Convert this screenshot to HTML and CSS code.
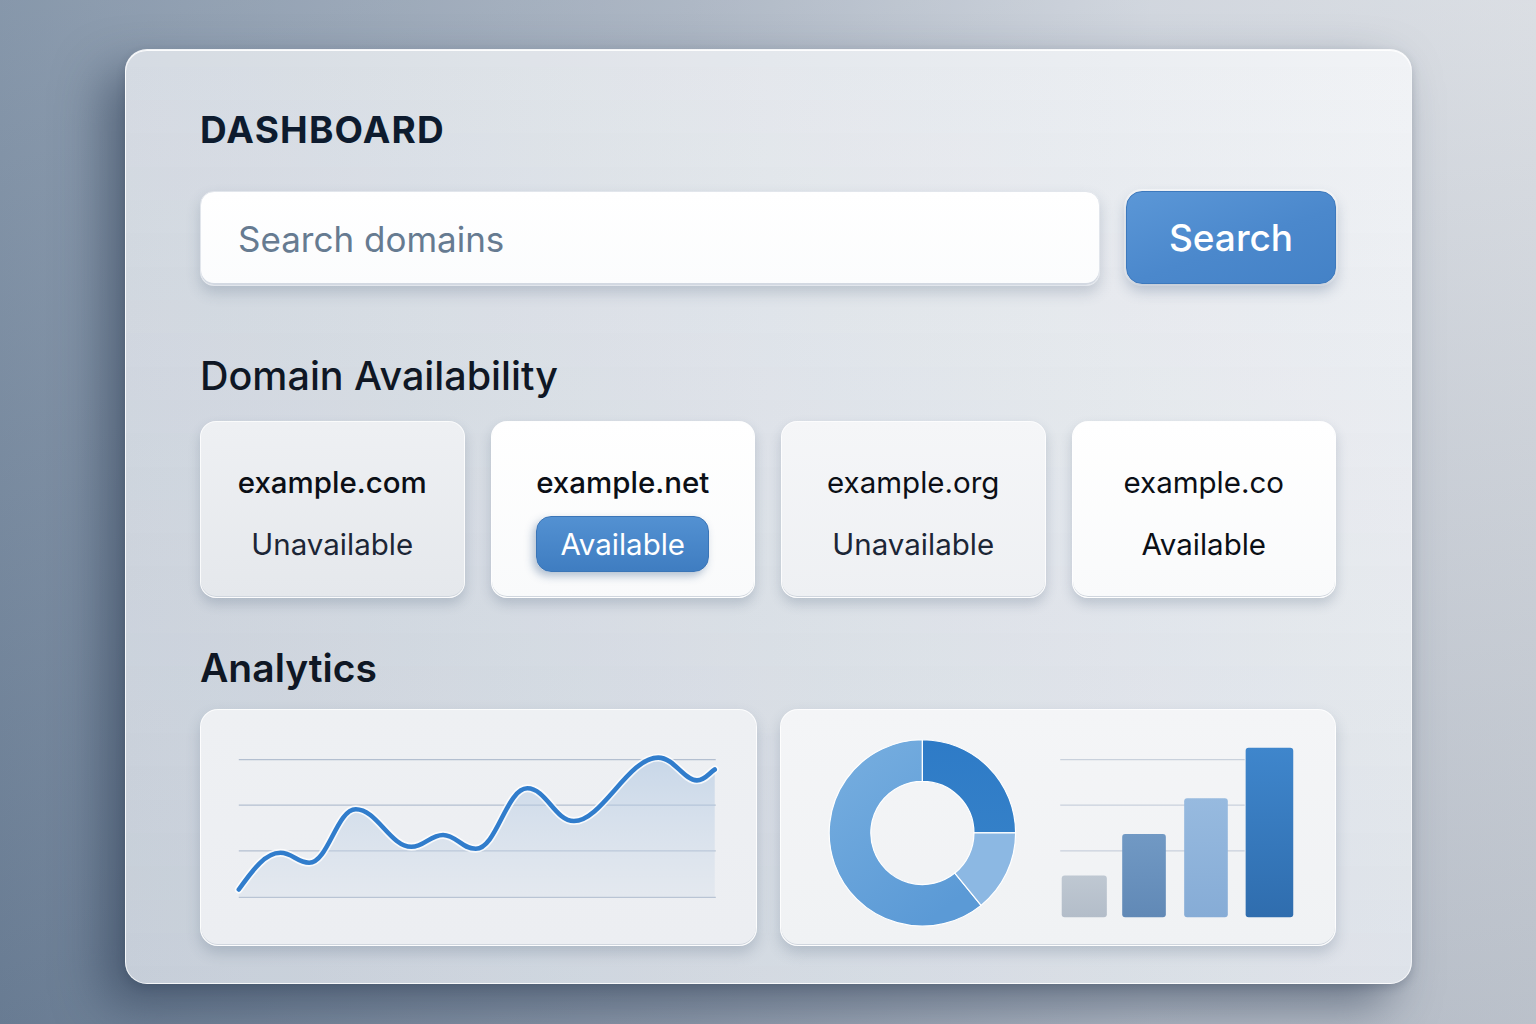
FILE: index.html
```html
<!DOCTYPE html>
<html lang="en">
<head>
<meta charset="utf-8">
<title>Dashboard</title>
<link rel="stylesheet" href="styles.css">
</head>
<body>
<main class="panel">
  <h1 class="title">DASHBOARD</h1>
  <div class="search-row">
    <div class="search-input">Search domains</div>
    <button class="search-btn">Search</button>
  </div>

  <h2 class="section-title">Domain Availability</h2>
  <div class="domains">
    <div class="domain-card card-gray">
      <div class="domain-name">example.com</div>
      <div class="status">Unavailable</div>
    </div>
    <div class="domain-card card-white">
      <div class="domain-name">example.net</div>
      <div class="status status-pill">Available</div>
    </div>
    <div class="domain-card card-light">
      <div class="domain-name name-regular">example.org</div>
      <div class="status">Unavailable</div>
    </div>
    <div class="domain-card card-white">
      <div class="domain-name name-regular">example.co</div>
      <div class="status status-dark">Available</div>
    </div>
  </div>

  <h2 class="section-title analytics-title">Analytics</h2>
  <div class="charts">
    <div class="chart-card chart-left">
      <svg class="chart-svg" viewBox="0 0 557 237" width="557" height="237">
        <defs>
          <linearGradient id="areaFill" x1="0" y1="0" x2="0" y2="1">
            <stop offset="0" stop-color="#a9c3e0" stop-opacity="0.55"/>
            <stop offset="1" stop-color="#d3dde9" stop-opacity="0.35"/>
          </linearGradient>
        </defs>
        <g stroke="#b3bfd0" stroke-width="1.2">
          <line x1="37" y1="50" x2="518" y2="50"/>
          <line x1="37" y1="96" x2="518" y2="96"/>
          <line x1="37" y1="142" x2="518" y2="142"/>
          <line x1="37" y1="189" x2="518" y2="189"/>
        </g>
        <path fill="url(#areaFill)" d="M37,181 C52,160 64,144 79,144 C91,144 96,154 108,154 C127,154 136,100 155,100 C176,100 190,138 211,138 C224,138 230,126 243,126 C256,126 262,140 276,140 C297,140 307,79 328,79 C347,79 356,112 375,112 C403,112 430,48 460,48 C476,48 486,71 499,71 C507,71 511,64 517,60 L517,189 L37,189 Z"/>
        <path fill="none" stroke="#ffffff" stroke-opacity="0.8" stroke-width="8" stroke-linecap="round" d="M37,181 C52,160 64,144 79,144 C91,144 96,154 108,154 C127,154 136,100 155,100 C176,100 190,138 211,138 C224,138 230,126 243,126 C256,126 262,140 276,140 C297,140 307,79 328,79 C347,79 356,112 375,112 C403,112 430,48 460,48 C476,48 486,71 499,71 C507,71 511,64 517,60"/>
        <path fill="none" stroke="#317dcc" stroke-width="4.6" stroke-linecap="round" d="M37,181 C52,160 64,144 79,144 C91,144 96,154 108,154 C127,154 136,100 155,100 C176,100 190,138 211,138 C224,138 230,126 243,126 C256,126 262,140 276,140 C297,140 307,79 328,79 C347,79 356,112 375,112 C403,112 430,48 460,48 C476,48 486,71 499,71 C507,71 511,64 517,60"/>
      </svg>
    </div>
    <div class="chart-card chart-right">
      <svg class="chart-svg" viewBox="0 0 556 237" width="556" height="237">
        <defs>
          <linearGradient id="donutMed" x1="0" y1="0" x2="0.6" y2="1">
            <stop offset="0" stop-color="#78afe0"/>
            <stop offset="1" stop-color="#5b9ad6"/>
          </linearGradient>
          <linearGradient id="donutDark" x1="0" y1="0" x2="0" y2="1">
            <stop offset="0" stop-color="#2e7bc7"/>
            <stop offset="1" stop-color="#3480c8"/>
          </linearGradient>
          <linearGradient id="barDark" x1="0" y1="0" x2="0" y2="1">
            <stop offset="0" stop-color="#3f86cc"/>
            <stop offset="1" stop-color="#2f6dae"/>
          </linearGradient>
          <linearGradient id="barMid" x1="0" y1="0" x2="0" y2="1">
            <stop offset="0" stop-color="#7199c4"/>
            <stop offset="1" stop-color="#6189b6"/>
          </linearGradient>
          <linearGradient id="barLight" x1="0" y1="0" x2="0" y2="1">
            <stop offset="0" stop-color="#97badf"/>
            <stop offset="1" stop-color="#86acd6"/>
          </linearGradient>
          <linearGradient id="barGray" x1="0" y1="0" x2="0" y2="1">
            <stop offset="0" stop-color="#bfc8d2"/>
            <stop offset="1" stop-color="#b3bdc9"/>
          </linearGradient>
        </defs>
        <g stroke="#ffffff" stroke-width="1.2">
          <path fill="url(#donutMed)" d="M200.2,197 A94,94 0 1 1 141,30 L141,72 A52,52 0 1 0 173.7,164.4 Z"/>
          <path fill="url(#donutDark)" d="M141,30 A94,94 0 0 1 235,124 L193,124 A52,52 0 0 0 141,72 Z"/>
          <path fill="#8cb8e3" d="M235,124 A94,94 0 0 1 200.2,197 L173.7,164.4 A52,52 0 0 0 193,124 Z"/>
        </g>
        <g stroke="#c9d1dc" stroke-width="1.2">
          <line x1="280" y1="50" x2="466" y2="50"/>
          <line x1="280" y1="96" x2="466" y2="96"/>
          <line x1="280" y1="142" x2="466" y2="142"/>
        </g>
        <rect x="281.5" y="167" width="45.5" height="42" rx="3" fill="url(#barGray)"/>
        <rect x="342.5" y="125" width="44" height="84" rx="3" fill="url(#barMid)"/>
        <rect x="405" y="89" width="44" height="120" rx="3" fill="url(#barLight)"/>
        <rect x="467" y="38" width="48" height="171" rx="3" fill="url(#barDark)"/>
      </svg>
    </div>
  </div>
</main>
</body>
</html>
```

FILE: styles.css
```css
* {
  box-sizing: border-box;
}

html, body {
  margin: 0;
  height: 100%;
}

body {
  width: 1536px;
  height: 1024px;
  padding: 49px 124px 40px 125px;
  font-family: "Inter", "Noto Sans", "Liberation Sans", sans-serif;
  background:
    linear-gradient(to bottom, rgba(255, 255, 255, 0.12), rgba(20, 40, 70, 0.14)),
    linear-gradient(to right, #76899f 0%, #a3aebd 45%, #cbd1da 75%, #d6dae0 100%);
  overflow: hidden;
}

.panel {
  width: 1287px;
  height: 935px;
  border-radius: 22px;
  padding: 61px 75px 37px 74px;
  background:
    linear-gradient(to bottom, rgba(255, 255, 255, 0.05), rgba(130, 148, 172, 0.16)),
    linear-gradient(to right, #d3d9e1 0%, #e3e7ec 50%, #f0f2f5 100%);
  border: 1px solid rgba(255, 255, 255, 0.75);
  box-shadow:
    -22px 22px 48px rgba(35, 52, 76, 0.5),
    0 4px 10px rgba(35, 52, 76, 0.2),
    inset 0 1px 0 rgba(255, 255, 255, 0.9);
  display: flex;
  flex-direction: column;
}

.title {
  margin: 0;
  font-size: 37px;
  line-height: 37px;
  font-weight: 700;
  letter-spacing: 1.2px;
  color: #0d1b2e;
}

.search-row {
  margin-top: 43px;
  display: flex;
  gap: 26px;
  align-items: flex-start;
}

.search-input {
  flex: 1;
  height: 95px;
  background: linear-gradient(to bottom, #ffffff, #fbfcfd);
  border-radius: 14px;
  border: 1px solid #e2e6ec;
  box-shadow:
    0 7px 14px rgba(60, 80, 110, 0.22),
    inset 0 -2px 0 #d3d9e2;
  display: flex;
  align-items: center;
  padding-left: 37px;
  font-size: 35px;
  color: #667b91;
}

.search-btn {
  width: 210px;
  height: 93px;
  border-radius: 16px;
  border: 1px solid #3d79bd;
  background: linear-gradient(160deg, #5b97d7 0%, #4b88cc 55%, #4482c7 100%);
  color: #ffffff;
  font-family: inherit;
  font-size: 37px;
  font-weight: 500;
  box-shadow:
    0 7px 14px rgba(50, 80, 120, 0.28),
    0 0 0 2px rgba(255, 255, 255, 0.6);
  padding: 0;
}

.section-title {
  margin: 70px 0 0;
  font-size: 39.5px;
  line-height: 40px;
  font-weight: 500;
  color: #0f1724;
}

.analytics-title {
  margin-top: 49px;
  font-size: 39px;
  line-height: 42px;
  font-weight: 600;
}

.domains {
  margin-top: 25px;
  display: grid;
  grid-template-columns: repeat(4, 1fr);
  gap: 26px;
}

.domain-card {
  height: 177px;
  border-radius: 16px;
  border: 1px solid rgba(255, 255, 255, 0.8);
  box-shadow:
    0 6px 12px rgba(60, 80, 110, 0.22),
    inset 0 -1px 0 #d0d6de;
  display: flex;
  flex-direction: column;
  align-items: center;
  padding-top: 45px;
}

.card-gray {
  background: linear-gradient(to bottom, #eef0f3, #e5e8ec);
}

.card-light {
  background: linear-gradient(to bottom, #f5f6f8, #eef0f3);
}

.card-white {
  background: linear-gradient(to bottom, #ffffff, #f9fafb);
}

.domain-name {
  font-size: 29.5px;
  line-height: 30px;
  font-weight: 500;
  color: #0b0f16;
}

.name-regular {
  font-weight: 400;
}

.status {
  margin-top: 19px;
  padding: 13px 23px;
  font-size: 29.5px;
  line-height: 30px;
  color: #1c2636;
  border-radius: 15px;
}

.status-dark {
  color: #0b0f16;
}

.status-pill {
  background: linear-gradient(to bottom, #5391d2, #3f7dc1);
  color: #ffffff;
  border: 1px solid #3a75b7;
  box-shadow: -3px 4px 8px rgba(40, 80, 130, 0.35);
  padding: 12px 23px;
}

.charts {
  margin-top: 20px;
  display: grid;
  grid-template-columns: 1fr 1fr;
  gap: 23px;
}

.chart-card {
  height: 237px;
  border-radius: 18px;
  border: 1px solid rgba(255, 255, 255, 0.85);
  box-shadow:
    0 7px 14px rgba(60, 80, 110, 0.22),
    inset 0 -1px 0 #d0d6de;
  overflow: hidden;
}

.chart-left {
  background: linear-gradient(to bottom, #eef0f3, #eceef2);
}

.chart-right {
  background: linear-gradient(to bottom, #f4f5f7, #f0f2f4);
}

.chart-svg {
  display: block;
  width: 100%;
  height: 100%;
}
```
